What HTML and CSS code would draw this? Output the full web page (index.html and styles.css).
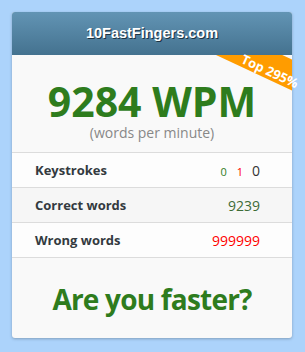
FILE: index.html
```html
<!DOCTYPE html>
<html lang="en">
<head>
  <meta charset="UTF-8" />
  <title>10FastFingers - Result</title>
  <meta name="viewport" content="width=device-width, initial-scale=1.0">
  <link rel="stylesheet" href="styles.css">
</head>
<body>
  <div class="card">
    <div class="head">10FastFingers.com</div>
    <div class="main">
      <div class="corner"><div class="band"></div></div>
      <div class="badge">Top 295%</div>

      <div class="score">
        <div class="wpm">9284 WPM</div>
        <div class="sub">(words per minute)</div>
      </div>

      <div class="row">
        <span class="label">Keystrokes</span>
        <span class="val"><span class="ok">0</span><span class="bad">1</span><span class="total">0</span></span>
      </div>
      <div class="row even">
        <span class="label">Correct words</span>
        <span class="val correct">9239</span>
      </div>
      <div class="row">
        <span class="label">Wrong words</span>
        <span class="val wrong">999999</span>
      </div>

      <div class="faster">Are you faster?</div>
    </div>
  </div>
</body>
</html>
```

FILE: styles.css
```css
body {
  margin: 0;
  background-color: #acd3fb;
  font-family: "Open Sans", sans-serif;
}
.card {
  width: 280px;
  margin: 12px;
  background: #f9f9f9;
  border-radius: 3px;
  box-shadow: 0 1px 3px rgba(0,0,0,0.25);
}
.head {
  height: 43px;
  line-height: 43px;
  text-align: center;
  color: white;
  font-family: "Liberation Sans", Arial, sans-serif;
  font-weight: bold;
  font-size: 14.5px;
  text-shadow: 1px 1px 0 #1d3342;
  background: linear-gradient(#6294b4, #44728f);
  border-radius: 3px 3px 0 0;
}
.main {
  position: relative;
}
.corner {
  position: absolute;
  top: 0;
  right: 0;
  width: 100px;
  height: 50px;
  overflow: hidden;
}
.band {
  position: absolute;
  left: -30px;
  top: -8px;
  width: 200px;
  height: 28px;
  background: #ff9c00;
  transform: rotate(25deg);
}
.badge {
  position: absolute;
  left: 218px;
  top: 8px;
  width: 80px;
  height: 16px;
  line-height: 16px;
  text-align: center;
  color: white;
  font-weight: bold;
  font-size: 13px;
  transform: rotate(25deg);
}
.score {
  padding: 24px 0 10px;
  text-align: center;
  border-bottom: 1px solid #dcdcdc;
}
.wpm {
  font-size: 41px;
  line-height: 44px;
  font-weight: bold;
  color: #2e7c1d;
}
.sub {
  margin-top: 1px;
  font-size: 14px;
  line-height: 18px;
  color: #888;
}
.row {
  display: flex;
  justify-content: space-between;
  align-items: center;
  height: 34px;
  padding: 0 32px 0 23px;
  background: #fdfdfd;
  border-bottom: 1px solid #dcdcdc;
}
.row.even {
  background: #f6f6f6;
}
.label {
  font-size: 13px;
  font-weight: bold;
  color: #333a40;
}
.val {
  font-size: 14px;
  color: #333;
}
.ok {
  font-size: 11px;
  color: #2e7c1d;
}
.bad {
  margin-left: 10px;
  font-size: 11px;
  color: #f00;
}
.total {
  margin-left: 9px;
  font-size: 14px;
}
.correct {
  color: #3d6b37;
}
.wrong {
  color: #f00;
}
.faster {
  padding: 24px 0 22px;
  text-align: center;
  font-size: 28px;
  line-height: 34px;
  font-weight: bold;
  color: #2e7c1d;
  letter-spacing: -0.8px;
}
```
